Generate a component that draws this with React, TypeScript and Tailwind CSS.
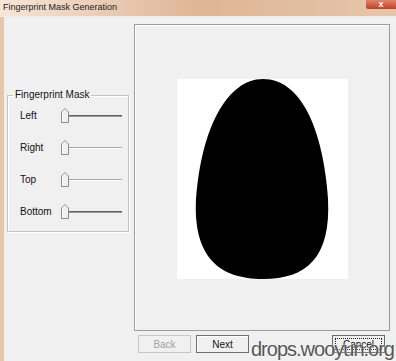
import React from "react";

const sliders = [
  { label: "Left", active: true },
  { label: "Right", active: false },
  { label: "Top", active: false },
  { label: "Bottom", active: true },
];

function Thumb() {
  return (
    <svg width="8" height="15" viewBox="0 0 8 15" className="shrink-0">
      <path d="M0.5 14.5V4L4 0.5L7.5 4V14.5Z" fill="#f0f0f0" stroke="#8a8a8a" />
      <path d="M1.5 13.5V4.4L4 1.9" fill="none" stroke="#ffffff" />
    </svg>
  );
}

function SliderRow({ label, active }: { label: string; active: boolean }) {
  return (
    <div className="flex items-center h-[15px]">
      <span className="w-[41px] text-[10px] text-[#111]">{label}</span>
      <Thumb />
      {active ? (
        <div className="flex-1 h-[2px] bg-[#5f5f5f] border-b border-[#9a9a9a]" />
      ) : (
        <div className="flex-1 h-[2px] border-t border-[#a8a8a8] border-b border-b-white" />
      )}
    </div>
  );
}

export default function App() {
  return (
    <div className="w-[396px] h-[361px] relative overflow-hidden bg-[#f0f0f0] font-['Liberation_Sans',Arial,sans-serif] select-none">
      <div className="h-[16px] flex items-start justify-between bg-gradient-to-r from-[#f6e6d8] via-[#deb596] to-[#e6c6aa]">
        <span className="pl-[3px] pt-[2px] text-[9px] leading-[11px] text-[#1c1c1c]">
          Fingerprint Mask Generation
        </span>
        <div className="w-[30px] h-[9px] flex items-center justify-center bg-gradient-to-b from-[#e0836a] to-[#c23d27] rounded-bl-[2px] text-white text-[9px] leading-none font-bold">
          x
        </div>
      </div>
      <div className="h-px bg-[#f5ece4]" />
      <div className="flex h-[344px]">
        <div className="w-[4px] bg-[#e8c6a8]" />
        <div className="w-[130px]">
          <fieldset className="ml-[3px] mt-[72px] w-[122px] border border-[#c3c3c3] shadow-[inset_1px_1px_0_#fff,1px_1px_0_#fff] pl-[12px] pr-[6px] pb-[12px]">
            <legend className="-ml-[7px] px-[2px] text-[10px] leading-[12px] text-[#111]">
              Fingerprint Mask
            </legend>
            <div className="flex flex-col gap-[17px] pt-[7px]">
              {sliders.map((s) => (
                <SliderRow key={s.label} label={s.label} active={s.active} />
              ))}
            </div>
          </fieldset>
        </div>
        <div className="flex flex-col">
          <div className="mt-[7px] w-[256px] h-[307px] border border-[#9c9c9c] shadow-[inset_1px_1px_0_#fff] flex justify-center pt-[54px]">
            <div className="w-[171px] h-[200px] bg-white">
              <svg width="171" height="200" viewBox="0 0 171 200">
                <path
                  d="M86 0C124 0 146 50 151 120C154 178 130 200 86 200C42 200 16 178 19 120C24 50 50 0 86 0Z"
                  fill="#000"
                />
              </svg>
            </div>
          </div>
          <div className="flex mt-[4px] text-[10px]">
            <button className="ml-[4px] w-[53px] h-[18px] border border-[#c6c6c6] bg-[#f0f0f0] text-[#a2a2a2]">
              Back
            </button>
            <button className="ml-[5px] w-[53px] h-[18px] border border-[#707070] bg-[#f0f0f0] text-[#111] shadow-[inset_1px_1px_0_#fff]">
              Next
            </button>
            <button className="ml-[83px] w-[53px] h-[18px] border border-[#6a6a6a] bg-[#f0f0f0] text-[#111] p-[2px]">
              <span className="flex h-full items-center justify-center border border-dotted border-[#222]">
                Cancel
              </span>
            </button>
          </div>
        </div>
      </div>
      <div className="absolute left-[251px] top-[339px] text-[20px] leading-none tracking-[-1px] text-[#575757] [text-shadow:0_0_2px_#fff]">
        drops.wooyun.org
      </div>
    </div>
  );
}
